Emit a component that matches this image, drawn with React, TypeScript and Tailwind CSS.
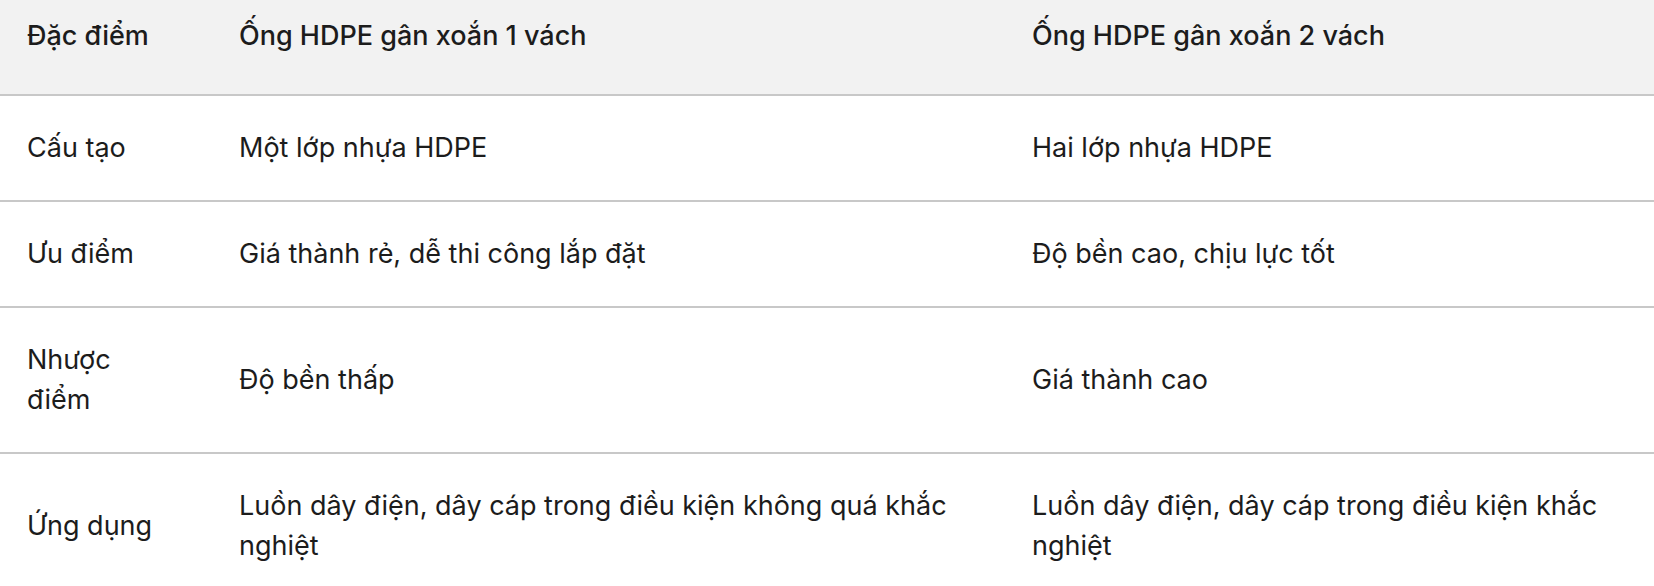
import React from 'react';

type Row = { label: string; one: string; two: string };

const rows: Row[] = [
  { label: 'Cấu tạo', one: 'Một lớp nhựa HDPE', two: 'Hai lớp nhựa HDPE' },
  { label: 'Ưu điểm', one: 'Giá thành rẻ, dễ thi công lắp đặt', two: 'Độ bền cao, chịu lực tốt' },
  { label: 'Nhược điểm', one: 'Độ bền thấp', two: 'Giá thành cao' },
  {
    label: 'Ứng dụng',
    one: 'Luồn dây điện, dây cáp trong điều kiện không quá khắc nghiệt',
    two: 'Luồn dây điện, dây cáp trong điều kiện khắc nghiệt',
  },
];

const cols = 'grid grid-cols-[212px_793px_1fr]';

const App: React.FC = () => {
  return (
    <div className="w-[1654px] h-[586px] overflow-hidden bg-white text-[#1c1c1c] font-['Inter','Noto_Sans',sans-serif] text-[27px] leading-[40px]">
      {/* header */}
      <div className={`${cols} bg-[#f2f2f2] border-b-2 border-[#c8c8c8] h-[96px] font-medium`}>
        <div className="px-[27px] pt-4">Đặc điểm</div>
        <div className="px-[27px] pt-4">Ống HDPE gân xoắn 1 vách</div>
        <div className="px-[27px] pt-4">Ống HDPE gân xoắn 2 vách</div>
      </div>
      {rows.map((r, i) => (
        <div
          key={r.label}
          className={`${cols} items-center ${i < rows.length - 1 ? 'border-b-2 border-[#c8c8c8]' : ''}`}
        >
          <div className="pl-[27px] pr-[36px] py-8">{r.label}</div>
          <div className="px-[27px] py-8">{r.one}</div>
          <div className="px-[27px] py-8">{r.two}</div>
        </div>
      ))}
    </div>
  );
};

export default App;
